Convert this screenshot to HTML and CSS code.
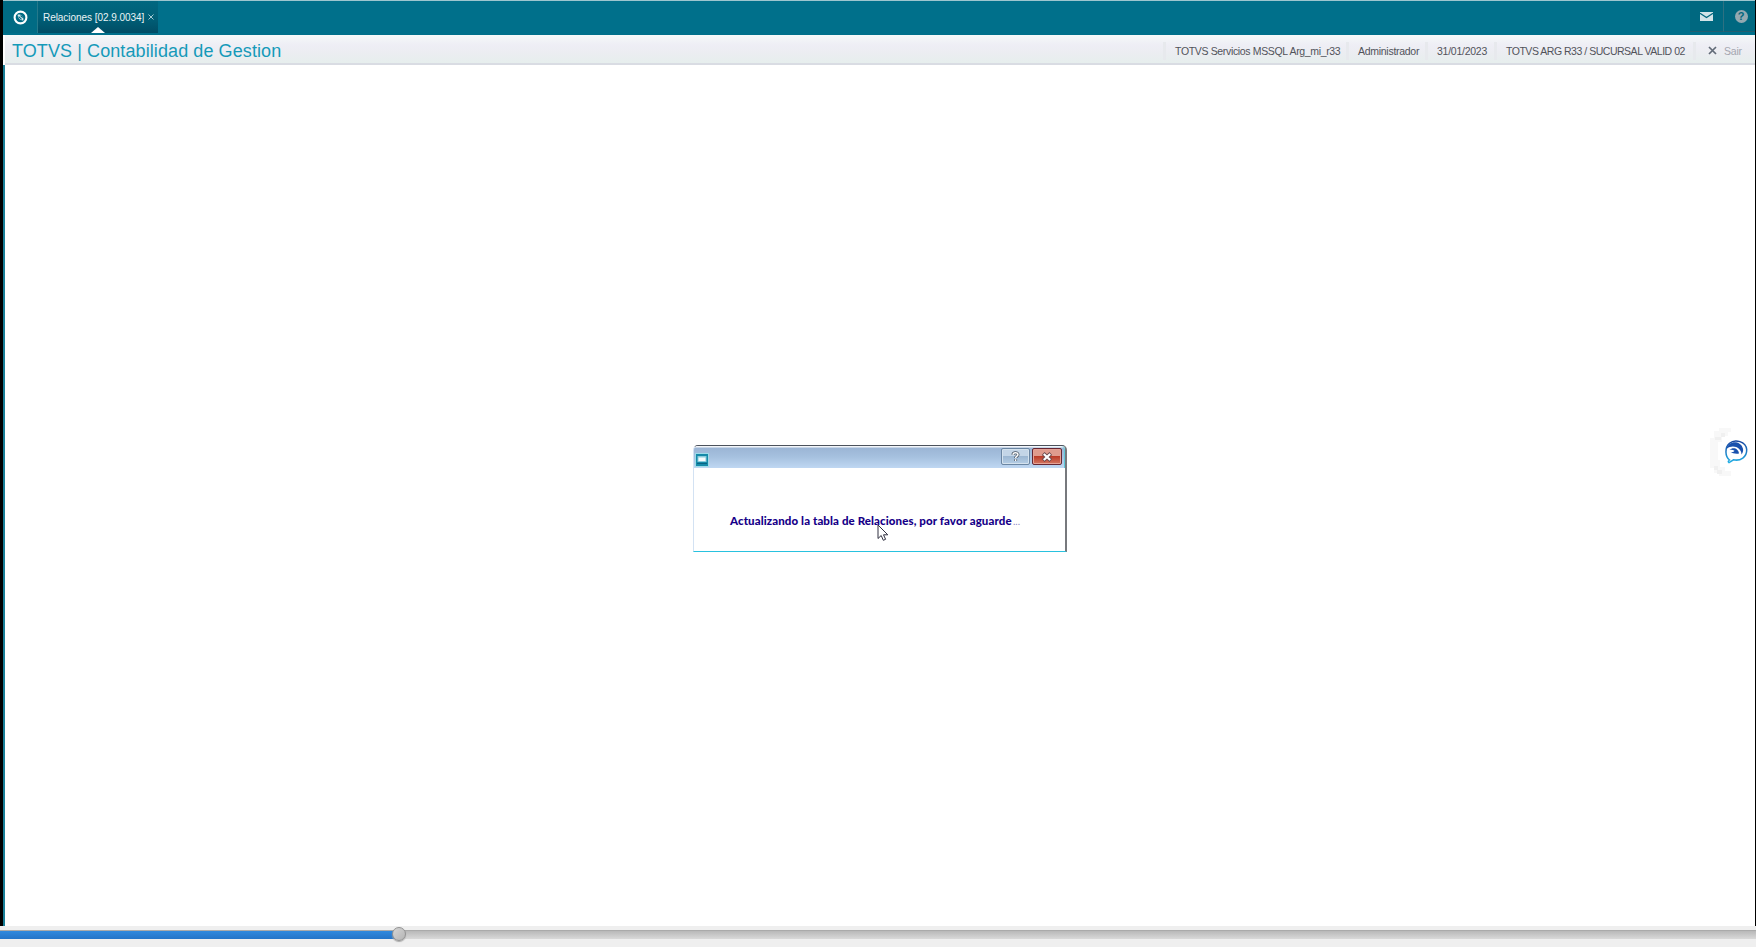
FILE: index.html
```html
<!DOCTYPE html>
<html lang="es">

<head>
    <meta charset="utf-8">
    <title>TOTVS | Contabilidad de Gestion</title>
    <link rel="stylesheet" href="styles.css">
</head>

<body>
    <div class="screen">
        <div class="topbar">
            <div class="home">
                <svg width="15" height="15" viewBox="0 0 15 15">
                    <circle cx="7.5" cy="7.5" r="5.9" fill="none" stroke="#fff" stroke-width="2.1"/>
                    <path d="M4.6 4.6 C7 3.8 10.8 5.5 10.4 10.4 C8 10.8 4.8 9 4.6 4.6Z" fill="#d8e9ed"/>
                    <path d="M5.6 6.6 L8.6 9.4 M7.5 5.5 L9.8 7.5" stroke="#006680" stroke-width="1.1"/>
                </svg>
            </div>
            <div class="tab">
                <span class="tab-name">Relaciones [02.9.0034]</span>
                <svg class="tab-close" width="6" height="6" viewBox="0 0 6 6"><path d="M.5 .5 L5.5 5.5 M5.5 .5 L.5 5.5" stroke="#a5cad3" stroke-width="1"/></svg>
            </div>
            <div class="tools">
                <div class="tool mail">
                    <svg width="13" height="9" viewBox="0 0 13 9">
                        <rect width="13" height="9" fill="#d3e3e8"/>
                        <path d="M0 1.3 L6.5 5.5 L13 1.3" fill="none" stroke="#00667d" stroke-width="1.2"/>
                    </svg>
                </div>
                <div class="tool help"><span class="help-mark">?</span></div>
            </div>
        </div>
        <div class="header">
            <h1>TOTVS | Contabilidad de Gestion</h1>
            <div class="info">
                <span class="item server">TOTVS Servicios MSSQL Arg_mi_r33</span>
                <span class="item user">Administrador</span>
                <span class="item date">31/01/2023</span>
                <span class="item branch">TOTVS ARG R33 / SUCURSAL VALID 02</span>
                <span class="item exit">
                    <svg width="9" height="9" viewBox="0 0 9 9"><path d="M1 1 L8 8 M8 1 L1 8" stroke="#626b78" stroke-width="1.7"/></svg>
                    <span class="exit-name">Sair</span>
                </span>
            </div>
        </div>
        <div class="desktop"></div>
    </div>

    <div class="dialog">
        <div class="titlebar">
            <svg class="dialog-icon" width="14" height="14" viewBox="0 0 14 14">
                <rect width="14" height="14" fill="#9edbe8"/>
                <rect x="1" y="1" width="12" height="12" fill="#158aa9"/>
                <rect x="2.5" y="3" width="9" height="6" fill="#8accdb"/>
                <rect x="3.5" y="4.5" width="7" height="3.5" fill="#f6fcfd"/>
                <path d="M2 10.5 H12" stroke="#086584"/>
            </svg>
            <div class="buttons">
                <div class="btn btn-help">
                    <svg width="9" height="11" viewBox="0 0 9 11"><path d="M2 3.8 C2 .9 7 1 7 3.6 C7 5.3 4.6 5 4.6 7.1 M4.6 8.3 V10" fill="none" stroke="#465260" stroke-width="3"/><path d="M2 3.8 C2 .9 7 1 7 3.6 C7 5.3 4.6 5 4.6 7.1 M4.6 8.3 V10" fill="none" stroke="#fff" stroke-width="1.5"/></svg>
                </div>
                <div class="btn btn-close">
                    <svg width="12" height="10" viewBox="0 0 12 10"><path d="M2.2 1.6 L9.8 8.4 M9.8 1.6 L2.2 8.4" stroke="#6b4a4d" stroke-width="4"/><path d="M2.8 2 L9.2 8 M9.2 2 L2.8 8" stroke="#fff" stroke-width="2.2"/></svg>
                </div>
            </div>
        </div>
        <div class="message"><b>Actualizando la tabla de Relaciones, por favor aguarde</b><span class="dots">...</span></div>
    </div>

    <svg class="cursor" width="12" height="18" viewBox="0 0 12 18"><path d="M1 1 V14.5 L4.2 11.5 L6.3 16.3 L8.6 15.3 L6.5 10.8 H10.8Z" fill="#fff" stroke="#303040" stroke-width="1"/></svg>

    <svg class="chat" width="46" height="50" viewBox="0 0 46 50">
        <path d="M21 0 H9 V3 H4 V10 H0 V40 H4 V45 H9 V48 H21 V43 H15 V39 H10 V32 H8 V14 H12 V8 H18 V4 H21Z" fill="#f8f8f8"/>
        <path d="M5 9 h6 v-4 h4 v4 h-4 v3 h-6Z M4 38 h4 v4 h4 v4 h-5 v-4 h-3Z" fill="#f0f0f0"/>
        <defs>
            <linearGradient id="bubble" x1="0" y1="0" x2="0" y2="1"><stop offset="0" stop-color="#1746a1"/><stop offset="1" stop-color="#21afe5"/></linearGradient>
        </defs>
        <path d="M19.5 32 C15 28.5 14.5 19.5 19.5 15.3 C25 10.5 36 13.5 36.7 21.5 C37 29 30.5 33.3 23.5 31.8 L19 34.6 Q17.3 33.5 19.5 32Z" fill="#fff" stroke="url(#bubble)" stroke-width="1.5"/>
        <path d="M16.5 21 C19 11.5 30.5 13 32.5 19.5 C34 22.5 32.5 25 31.5 26.5 C31.5 20 23 15.5 16.5 21Z" fill="#1950ad"/>
        <path d="M19.5 22 C23 18.5 28.5 20.5 29 25.5 C26 26 22.5 25.5 20.5 24 C22.5 24.5 24 24 24.5 22.8 C23 21.5 21 21.4 19.5 22Z" fill="#1950ad"/>
    </svg>

    <div class="player">
        <div class="track">
            <div class="played"></div>
            <div class="knob"></div>
        </div>
    </div>
</body>

</html>
```

FILE: styles.css
```css
* {
    box-sizing: border-box;
}

body {
    margin: 0;
    height: 947px;
    overflow: hidden;
    background-color: #efefef;
    font-family: "Liberation Sans", Arial, sans-serif;
    font-size: 11px;
}

svg {
    display: block;
    flex-shrink: 0;
}

.screen {
    display: flex;
    flex-direction: column;
    height: 926px;
    border-left: 3px solid #000;
    border-right: 1px solid #000;
    background-color: #fff;
}

.topbar {
    display: flex;
    height: 35px;
    border-top: 1px solid #9dc6cf;
    background-color: #00708b;
}

.home {
    display: flex;
    justify-content: center;
    align-items: center;
    width: 35px;
    height: 32px;
    padding-left: 1px;
    border-right: 1px solid #25798b;
    background-color: #006b84;
}

.tab {
    position: relative;
    display: flex;
    align-items: center;
    width: 120px;
    height: 32px;
    padding-left: 5px;
    background: linear-gradient(#006780, #006078 50%, #004d65);
    color: #e9f4f6;
    font-size: 10px;
    letter-spacing: -0.05px;
    white-space: nowrap;
}

.tab::after {
    content: "";
    position: absolute;
    left: 53px;
    bottom: 0;
    border: 7px solid transparent;
    border-top: 0;
    border-bottom: 6px solid #fff;
}

.tab-name {
    width: 105px;
}

.tab-close {
    margin-bottom: 1px;
}

.tools {
    display: flex;
    margin-left: auto;
}

.tool {
    display: flex;
    justify-content: center;
    align-items: center;
    height: 31px;
    border-bottom: 1px solid #235f70;
    background-color: #006880;
}

.mail {
    width: 34px;
    border-right: 1px solid #2d7182;
}

.help {
    width: 31px;
    padding-left: 3px;
}

.help-mark {
    width: 13px;
    height: 13px;
    border-radius: 50%;
    background-color: #93a9b1;
    color: #00667d;
    font-size: 11px;
    font-weight: bold;
    line-height: 13px;
    text-align: center;
}

.header {
    display: flex;
    justify-content: space-between;
    height: 30px;
    margin-left: 2px;
    border-bottom: 2px solid #d9dce3;
    background: linear-gradient(#f5f9f9, #eeeef5 35%, #ecedf2 60%, #e6eeed);
}

h1 {
    margin: 0;
    padding-left: 7px;
    color: #159ab9;
    font-size: 18px;
    font-weight: normal;
    letter-spacing: 0.09px;
    line-height: 32px;
    white-space: nowrap;
}

.info {
    display: flex;
    align-items: center;
    padding-top: 3px;
    color: #51535a;
    font-size: 10.5px;
    white-space: nowrap;
}

.item {
    height: 18px;
    padding-left: 9px;
    border-left: 3px solid #e7e9ed;
    line-height: 18px;
}

.server {
    width: 183px;
    letter-spacing: -0.34px;
}

.user {
    width: 79px;
    letter-spacing: -0.28px;
}

.date {
    width: 69px;
    letter-spacing: -0.25px;
}

.branch {
    width: 199px;
    letter-spacing: -0.48px;
}

.exit {
    display: flex;
    align-items: center;
    gap: 7px;
    width: 62px;
    padding-left: 12px;
    color: #a4a6af;
    letter-spacing: -0.2px;
}

.desktop {
    flex: 1;
    border-left: 2px solid #197f98;
}

.dialog {
    position: absolute;
    left: 693px;
    top: 445px;
    width: 374px;
    height: 107px;
    border: 1px solid #d3e2f3;
    border-top: 1px solid #4c525c;
    border-right: 2px solid #77797d;
    border-bottom: 1px solid #29c2df;
    border-radius: 5px 5px 0 0;
    background-color: #fff;
}

.titlebar {
    display: flex;
    justify-content: space-between;
    height: 22px;
    border-right: 1px solid #5fc8d8;
    border-radius: 4px 4px 0 0;
    background: linear-gradient(#f3f6fa 1px, #9bb5d5 2px, #a6c1df 50%, #bfd7f2);
}

.dialog-icon {
    margin: 7px 0 0 1px;
}

.buttons {
    display: flex;
    gap: 2px;
    padding: 2px 2px 0 0;
}

.btn {
    display: flex;
    justify-content: center;
    align-items: center;
    height: 17px;
    border: 1px solid #6b86a3;
    border-radius: 2px;
    box-shadow: inset 0 0 0 1px #d4e2ee;
}

.btn-help {
    width: 29px;
    background: linear-gradient(#c3d5e7 45%, #9cb7d2 50%, #b6cee6);
}

.btn-close {
    width: 30px;
    border-color: #662733;
    background: linear-gradient(#df9b8d 45%, #bb3c28 50%, #d37762);
    box-shadow: inset 0 0 0 1px #e5a296;
}

.message {
    display: flex;
    padding: 44px 0 0 36px;
    color: #160088;
    font-family: Lato, "Open Sans", sans-serif;
    font-size: 11.5px;
    line-height: 18px;
    white-space: nowrap;
}

.message b {
    width: 283px;
    font-weight: 900;
    letter-spacing: 0.1px;
}

.dots {
    color: #8d86c4;
    font-size: 10px;
}

.cursor {
    position: absolute;
    left: 877px;
    top: 524px;
}

.chat {
    position: absolute;
    left: 1710px;
    top: 428px;
}

.player {
    height: 21px;
    padding-top: 4px;
}

.track {
    position: relative;
    height: 9px;
    border-top: 1px solid #aaa;
    background: linear-gradient(#b8b8b8, #d9d9d9);
}

.played {
    width: 399px;
    height: 8px;
    background: linear-gradient(#3089de, #2474c8);
}

.knob {
    position: absolute;
    left: 392px;
    top: -4px;
    width: 14px;
    height: 14px;
    border: 1px solid #929292;
    border-radius: 50%;
    background: linear-gradient(135deg, #d5d5d5, #b5b5b5);
    box-shadow: 0 1px 1px #aaa;
}
```
